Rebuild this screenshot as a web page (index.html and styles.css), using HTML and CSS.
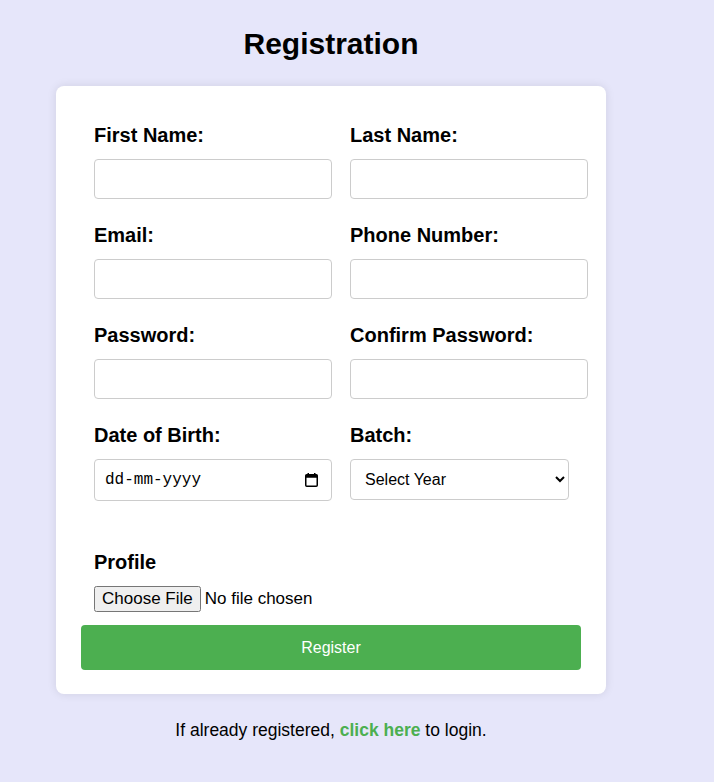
FILE: index.html
```html
<!DOCTYPE html>
<html lang="en">
<head>
<meta charset="utf-8">
<title>Registration</title>
<link rel="stylesheet" href="styles.css">
</head>
<body>
<div class="page">
  <h2 class="title">Registration</h2>
  <form class="card">
    <div class="row">
      <div class="field">
        <label class="label" for="fn">First Name:</label>
        <input class="input" id="fn" type="text">
      </div>
      <div class="field">
        <label class="label" for="ln">Last Name:</label>
        <input class="input" id="ln" type="text">
      </div>
    </div>
    <div class="row">
      <div class="field">
        <label class="label" for="em">Email:</label>
        <input class="input" id="em" type="email">
      </div>
      <div class="field">
        <label class="label" for="ph">Phone Number:</label>
        <input class="input" id="ph" type="tel">
      </div>
    </div>
    <div class="row">
      <div class="field">
        <label class="label" for="pw">Password:</label>
        <input class="input" id="pw" type="password">
      </div>
      <div class="field">
        <label class="label" for="cpw">Confirm Password:</label>
        <input class="input" id="cpw" type="password">
      </div>
    </div>
    <div class="row">
      <div class="field">
        <label class="label" for="dob">Date of Birth:</label>
        <div class="date-wrap">
          <input class="input date" id="dob" type="text" placeholder="dd-mm-yyyy">
          <svg class="cal" width="15" height="16" viewBox="0 0 15 16" aria-hidden="true">
            <rect x="1.75" y="2.75" width="11.5" height="11.5" rx="1" fill="none" stroke="#000" stroke-width="1.5"/>
            <rect x="1.75" y="2.75" width="11.5" height="3" fill="#000"/>
            <rect x="3.5" y="1" width="1.5" height="2.5" fill="#000"/>
            <rect x="10" y="1" width="1.5" height="2.5" fill="#000"/>
          </svg>
        </div>
      </div>
      <div class="field">
        <label class="label" for="batch">Batch:</label>
        <select class="select" id="batch">
          <option>Select Year</option>
          <option>2021</option>
          <option>2022</option>
          <option>2023</option>
          <option>2024</option>
        </select>
      </div>
    </div>
    <div class="profile">
      <label class="label" for="pf">Profile</label>
      <input class="file" id="pf" type="file">
    </div>
    <button class="submit" type="button">Register</button>
  </form>
  <p class="footer">If already registered, <a class="link" href="#">click here</a> to login.</p>
</div>
</body>
</html>
```

FILE: styles.css
```css
* {
  box-sizing: border-box;
}

body {
  margin: 0;
  background: #e6e6fa;
  font-family: "Liberation Sans", Arial, sans-serif;
  color: #000;
}

.page {
  width: 550px;
  margin-left: 56px;
  padding-top: 27px;
}

.title {
  margin: 0 0 25px;
  text-align: center;
  font-size: 30px;
  line-height: 34px;
  font-weight: bold;
}

.card {
  background: #fff;
  border-radius: 8px;
  box-shadow: 0 0 10px rgba(0, 0, 0, 0.1);
  padding: 25px 25px 24px;
}

.row {
  display: flex;
  gap: 18px;
  margin: 13px 0 25px 13px;
}

.row + .row {
  margin-top: 0;
}

.field {
  flex: none;
  width: 238px;
}

.label {
  display: block;
  font-size: 20px;
  line-height: 23px;
  font-weight: bold;
  margin-bottom: 12px;
}

.input {
  display: block;
  width: 238px;
  height: 40px;
  padding: 0 10px;
  border: 1px solid #ccc;
  border-radius: 4px;
  font-size: 16px;
  font-family: "Liberation Sans", Arial, sans-serif;
  background: #fff;
}

.date-wrap {
  position: relative;
}

.date {
  height: 42px;
  font-family: "Liberation Mono", monospace;
  color: #000;
}

.date::placeholder {
  color: #000;
  opacity: 1;
}

.cal {
  position: absolute;
  right: 13px;
  top: 13px;
}

.select {
  display: block;
  width: 219px;
  height: 41px;
  padding: 0 10px;
  border: 1px solid #ccc;
  border-radius: 4px;
  font-size: 16px;
  font-family: "Liberation Sans", Arial, sans-serif;
  background: #fff;
  color: #000;
}

.profile {
  margin: 50px 0 0 13px;
}

.file {
  display: block;
  font-size: 17px;
  font-family: "Liberation Sans", Arial, sans-serif;
  height: 26px;
}

.submit {
  display: block;
  width: 500px;
  height: 45px;
  margin-top: 13px;
  border: none;
  border-radius: 4px;
  background: #4caf50;
  color: #fff;
  font-size: 16px;
  font-family: "Liberation Sans", Arial, sans-serif;
}

.footer {
  margin: 26px 0 0;
  text-align: center;
  font-size: 17.5px;
  line-height: 20px;
}

.link {
  color: #4caf50;
  font-weight: bold;
  text-decoration: none;
}
```
